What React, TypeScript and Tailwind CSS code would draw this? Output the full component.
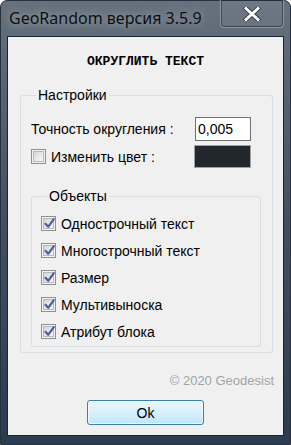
import React from "react";

const ui = { fontFamily: '"Liberation Sans", Arial, sans-serif' };

function CheckBox(props: { checked?: boolean }) {
  return (
    <span className="flex h-[15px] w-[15px] shrink-0 items-center justify-center border border-[#8e8f8f] bg-[#f4f4f4]">
      <span className="relative flex h-[11px] w-[11px] items-center justify-center border border-[#b4b8bd] bg-gradient-to-br from-[#d3d6db] to-[#f7f7f7]">
        {props.checked && (
          <svg width="13" height="13" viewBox="0 0 13 13" className="absolute -top-[2px] left-[-1px]">
            <path
              d="M2.5 6.8 L5.2 9.8 L10.8 2.2"
              fill="none"
              stroke="#4a5e9e"
              strokeWidth="2.2"
              strokeLinecap="round"
              strokeLinejoin="round"
            />
          </svg>
        )}
      </span>
    </span>
  );
}

function Option(props: { label: string }) {
  return (
    <div className="flex h-[27px] items-center gap-[5px]">
      <CheckBox checked />
      <span className="text-[14px] leading-[16px] text-black">{props.label}</span>
    </div>
  );
}

export default function App() {
  const objects = [
    "Однострочный текст",
    "Многострочный текст",
    "Размер",
    "Мультивыноска",
    "Атрибут блока",
  ];

  return (
    <div
      className="flex h-[445px] w-[291px] flex-col rounded-t-[7px] border border-[#263240] bg-gradient-to-b from-[#66717d] via-[#414f60] to-[#2b3c50] px-[6px] pb-[8px]"
      style={ui}
    >
      {/* заголовок окна */}
      <div className="flex h-[35px] items-start justify-between">
        <div
          className="ml-[2px] mt-[8px] text-[16px] leading-[19px] text-[#0b0f14] [text-shadow:0_0_8px_rgba(255,255,255,0.55)]"
          style={{ fontFamily: '"Noto Sans", "Open Sans", sans-serif' }}
        >
          GeoRandom версия 3.5.9
        </div>
        <div className="mt-[-1px] flex h-[28px] w-[64px] items-center justify-center rounded-b-[4px] border border-t-0 border-[#8c97a3] bg-white/5 shadow-[inset_0_0_0_1px_rgba(30,40,52,0.6)]">
          <svg width="18" height="14" viewBox="0 0 18 14">
            <path
              d="M3 1.5 L15 12.5 M15 1.5 L3 12.5"
              stroke="#2a333d"
              strokeWidth="4.6"
              strokeLinecap="square"
            />
            <path
              d="M3 1.5 L15 12.5 M15 1.5 L3 12.5"
              stroke="#ffffff"
              strokeWidth="3"
              strokeLinecap="square"
            />
          </svg>
        </div>
      </div>

      {/* клиентская часть */}
      <div className="flex flex-1 flex-col border border-[#1a2532] bg-[#f0f0f0]">
        <div
          className="mt-[17px] text-center text-[13px] font-bold leading-[15px] text-black"
          style={{ fontFamily: '"Liberation Mono", "DejaVu Sans Mono", monospace' }}
        >
          ОКРУГЛИТЬ ТЕКСТ
        </div>

        <fieldset className="ml-[12px] mr-[10px] mt-[18px] rounded-[3px] border border-[#d5dfe5] px-[10px] pb-[5px] pt-[14px]">
          <legend className="ml-[5px] px-[2px] text-[14px] leading-[16px] text-black">Настройки</legend>

          <div className="flex h-[24px] items-center justify-between pr-[11px]">
            <span className="text-[14px] leading-[16px] text-black">Точность округления :</span>
            <div className="flex h-[24px] w-[56px] items-center border border-[#6f6f6f] bg-white pl-[2px] text-[14px] leading-[16px] text-black">
              0,005
            </div>
          </div>

          <div className="mt-[4px] flex h-[23px] items-center justify-between pr-[11px]">
            <div className="flex items-center gap-[5px]">
              <CheckBox />
              <span className="text-[14px] leading-[16px] text-black">Изменить цвет :</span>
            </div>
            <div className="h-[23px] w-[57px] border border-[#a0a0a0] bg-[#22272e]" />
          </div>

          <fieldset className="mr-[1px] mt-[20px] rounded-[3px] border border-[#d5dfe5] px-[9px] pb-[1px] pt-[6px]">
            <legend className="ml-[6px] px-[2px] text-[14px] leading-[16px] text-black">Объекты</legend>
            {objects.map((o) => (
              <Option key={o} label={o} />
            ))}
          </fieldset>
        </fieldset>

        <div className="mr-[9px] mt-[20px] text-right text-[13px] leading-[15px] text-[#a3a3a3]">
          © 2020 Geodesist
        </div>

        <div className="mt-[12px] flex justify-center">
          <button className="h-[25px] w-[117px] rounded-[3px] border border-[#3c7fb1] bg-gradient-to-b from-[#eaf6fd] via-[#d9f0fc] to-[#bee6fd] text-[14px] leading-[16px] text-black shadow-[inset_0_0_0_1px_rgba(255,255,255,0.7)]">
            Ok
          </button>
        </div>
      </div>
    </div>
  );
}
